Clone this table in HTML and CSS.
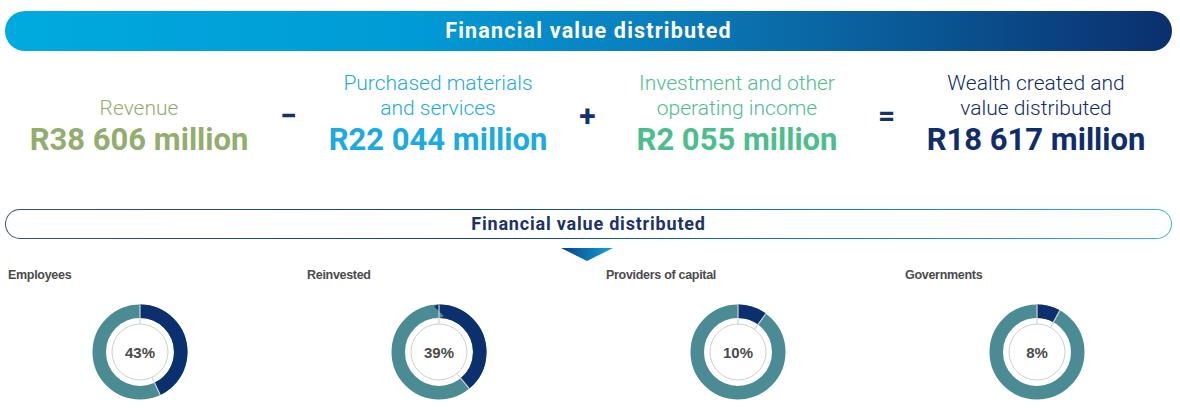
FILE: index.html
```html
<!DOCTYPE html>
<html lang="en">
<head>
<meta charset="utf-8">
<title>Financial value distributed</title>
<link rel="stylesheet" href="styles.css">
</head>
<body>
<div class="page">
  <div class="banner">Financial value distributed</div>

  <div class="figures">
    <div class="fig">
      <div class="fig-label">Revenue</div>
      <div class="fig-value">R38 606 million</div>
    </div>
    <div class="op">−</div>
    <div class="fig fig-blue">
      <div class="fig-label">Purchased materials<br>and services</div>
      <div class="fig-value">R22 044 million</div>
    </div>
    <div class="op">+</div>
    <div class="fig fig-green">
      <div class="fig-label">Investment and other<br>operating income</div>
      <div class="fig-value">R2 055 million</div>
    </div>
    <div class="op">=</div>
    <div class="fig fig-navy">
      <div class="fig-label">Wealth created and<br>value distributed</div>
      <div class="fig-value">R18 617 million</div>
    </div>
  </div>

  <div class="outline-bar">Financial value distributed</div>
  <div class="pointer">
    <svg width="52" height="13" viewBox="0 0 52 13">
      <defs>
        <linearGradient id="tg" x1="0" y1="0" x2="1" y2="0">
          <stop offset="0" stop-color="#0a3f86"/>
          <stop offset="1" stop-color="#12a4dc"/>
        </linearGradient>
      </defs>
      <polygon points="0,0 52,0 26,13" fill="url(#tg)"/>
    </svg>
  </div>

  <div class="dist">
    <div class="dist-item">
      <div class="dist-label">Employees</div>
      <div class="donut-wrap">
        <svg class="donut" width="96" height="96" viewBox="0 0 96 96">
          <circle cx="48" cy="48" r="40.75" fill="none" stroke="#4b8b93" stroke-width="13.5"/>
          <circle cx="48" cy="48" r="40.75" fill="none" stroke="#0c2f6d" stroke-width="13.5" pathLength="100" stroke-dasharray="43 57" transform="rotate(-90 48 48)"/>
          <circle cx="48" cy="48" r="28" fill="none" stroke="#cfcfcf" stroke-width="1"/>
          <line x1="48" y1="20" x2="48" y2="0.5" stroke="#d3d3d3" stroke-width="1.2"/>
          <line x1="48" y1="20" x2="48" y2="0.5" stroke="#d3d3d3" stroke-width="1.2" transform="rotate(154.8 48 48)"/>
          <text x="48" y="53.5" class="pct">43%</text>
        </svg>
      </div>
    </div>
    <div class="dist-item">
      <div class="dist-label">Reinvested</div>
      <div class="donut-wrap">
        <svg class="donut" width="96" height="96" viewBox="0 0 96 96">
          <circle cx="48" cy="48" r="40.75" fill="none" stroke="#4b8b93" stroke-width="13.5"/>
          <circle cx="48" cy="48" r="40.75" fill="none" stroke="#0c2f6d" stroke-width="13.5" pathLength="100" stroke-dasharray="39 61" transform="rotate(-90 48 48)"/>
          <circle cx="48" cy="48" r="28" fill="none" stroke="#cfcfcf" stroke-width="1"/>
          <line x1="48" y1="20" x2="48" y2="0.5" stroke="#d3d3d3" stroke-width="1.2"/>
          <line x1="48" y1="20" x2="48" y2="0.5" stroke="#d3d3d3" stroke-width="1.2" transform="rotate(140.4 48 48)"/>
          <text x="48" y="53.5" class="pct">39%</text>
        </svg>
      </div>
    </div>
    <div class="dist-item">
      <div class="dist-label">Providers of capital</div>
      <div class="donut-wrap">
        <svg class="donut" width="96" height="96" viewBox="0 0 96 96">
          <circle cx="48" cy="48" r="40.75" fill="none" stroke="#4b8b93" stroke-width="13.5"/>
          <circle cx="48" cy="48" r="40.75" fill="none" stroke="#0c2f6d" stroke-width="13.5" pathLength="100" stroke-dasharray="10 90" transform="rotate(-90 48 48)"/>
          <circle cx="48" cy="48" r="28" fill="none" stroke="#cfcfcf" stroke-width="1"/>
          <line x1="48" y1="20" x2="48" y2="0.5" stroke="#d3d3d3" stroke-width="1.2"/>
          <line x1="48" y1="20" x2="48" y2="0.5" stroke="#d3d3d3" stroke-width="1.2" transform="rotate(36 48 48)"/>
          <text x="48" y="53.5" class="pct">10%</text>
        </svg>
      </div>
    </div>
    <div class="dist-item">
      <div class="dist-label">Governments</div>
      <div class="donut-wrap">
        <svg class="donut" width="96" height="96" viewBox="0 0 96 96">
          <circle cx="48" cy="48" r="40.75" fill="none" stroke="#4b8b93" stroke-width="13.5"/>
          <circle cx="48" cy="48" r="40.75" fill="none" stroke="#0c2f6d" stroke-width="13.5" pathLength="100" stroke-dasharray="8 92" transform="rotate(-90 48 48)"/>
          <circle cx="48" cy="48" r="28" fill="none" stroke="#cfcfcf" stroke-width="1"/>
          <line x1="48" y1="20" x2="48" y2="0.5" stroke="#d3d3d3" stroke-width="1.2"/>
          <line x1="48" y1="20" x2="48" y2="0.5" stroke="#d3d3d3" stroke-width="1.2" transform="rotate(28.8 48 48)"/>
          <text x="48" y="53.5" class="pct">8%</text>
        </svg>
      </div>
    </div>
  </div>
</div>
</body>
</html>
```

FILE: styles.css
```css
html, body {
  margin: 0;
  padding: 0;
  background: #ffffff;
}

body {
  width: 1180px;
  height: 408px;
  overflow: hidden;
  font-family: Roboto, "Liberation Sans", Arial, sans-serif;
}

.page {
  padding: 11px 8px 0 8px;
}

.banner {
  margin-left: -3px;
  height: 40px;
  border-radius: 20px;
  background: linear-gradient(90deg, #00aadf 0%, #009bd6 35%, #0a7fbd 55%, #0a5896 78%, #0b2f6e 100%);
  color: #ffffff;
  font-weight: 700;
  font-size: 21.5px;
  letter-spacing: 1.2px;
  line-height: 40px;
  text-align: center;
}

.figures {
  display: grid;
  grid-template-columns: 262px 37px 262px 37px 262px 37px 262px;
  margin-top: 19px;
  height: 88px;
}

.fig {
  display: flex;
  flex-direction: column;
  justify-content: flex-end;
  align-items: center;
  text-align: center;
  color: #92ad6d;
}

.fig-blue { color: #1caae2; }
.fig-green { color: #4dbd8e; }
.fig-navy { color: #0f2d6b; }

.fig-label {
  font-weight: 300;
  font-size: 21px;
  line-height: 25px;
}

.fig-value {
  font-weight: 700;
  font-size: 31px;
  line-height: 36px;
  margin-top: 1px;
}

.op {
  display: flex;
  align-items: center;
  justify-content: center;
  color: #12326e;
  font-weight: 700;
  font-size: 30px;
  padding-top: 2px;
}

.outline-bar {
  margin-left: -3px;
  margin-top: 51px;
  height: 28px;
  border-radius: 15px;
  border: 1px solid transparent;
  background:
    linear-gradient(#ffffff, #ffffff) padding-box,
    linear-gradient(90deg, #3a4f80 0%, #17457f 40%, #1a8ac8 80%, #3bb4e6 100%) border-box;
  color: #1b3369;
  font-weight: 700;
  font-size: 18px;
  letter-spacing: 0.8px;
  line-height: 28px;
  text-align: center;
}

.pointer {
  display: flex;
  justify-content: center;
  margin-top: 9px;
  margin-left: -6px;
  height: 13px;
}

.pointer svg {
  display: block;
}

.dist {
  display: grid;
  grid-template-columns: repeat(4, 299px);
  margin-top: 7px;
}

.dist-item {
  display: flex;
  flex-direction: column;
}

.dist-label {
  font-family: "Liberation Sans", Arial, sans-serif;
  font-weight: 700;
  font-size: 12.5px;
  line-height: 14px;
  color: #4b4b4d;
  letter-spacing: -0.3px;
}

.donut-wrap {
  width: 264px;
  display: flex;
  justify-content: center;
  margin-top: 22px;
}

.donut {
  display: block;
}

.pct {
  font-family: "Liberation Sans", Arial, sans-serif;
  font-weight: 700;
  font-size: 15px;
  fill: #4b4b4d;
  text-anchor: middle;
}
```
